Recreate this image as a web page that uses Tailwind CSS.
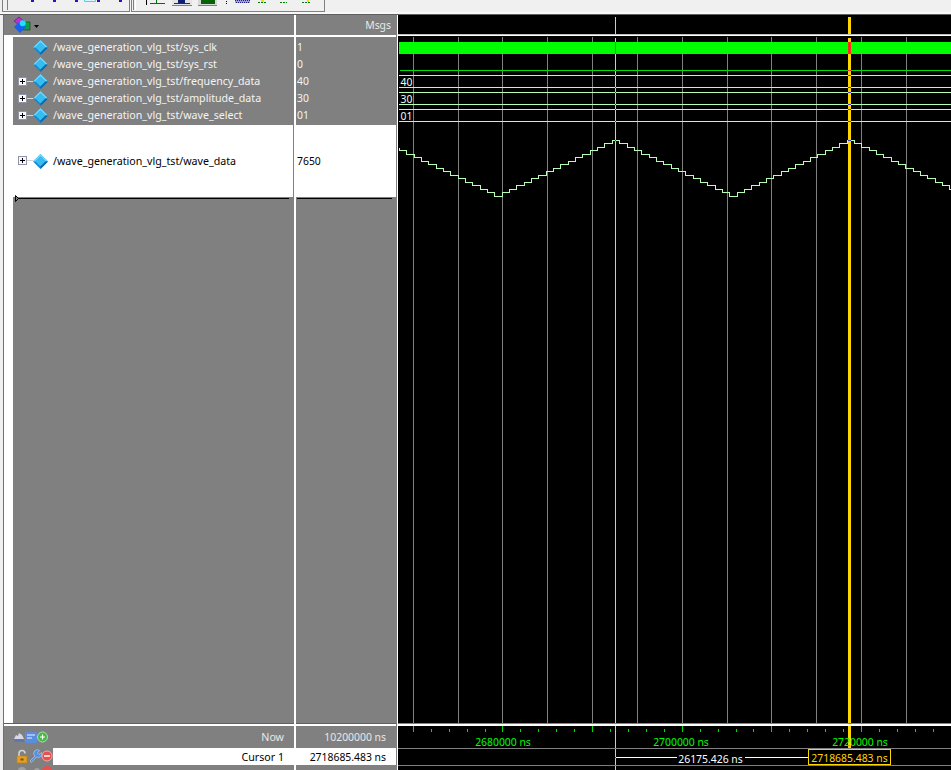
<!DOCTYPE html>
<html lang="en">
<head>
<meta charset="UTF-8">
<title>Wave</title>
<script src="https://cdn.jsdelivr.net/npm/@tailwindcss/browser@4"></script>
</head>
<body class="bg-[#f0f0f0] overflow-hidden font-['Noto_Sans',sans-serif] text-[10.65px] leading-none">

<!-- shared icons -->
<svg width="0" height="0" class="absolute">
  <defs>
    <symbol id="diamond" viewBox="0 0 15 15">
      <polygon points="7.5,0 15,7.5 7.5,15 0,7.5" fill="#1a86cc"/>
      <polygon points="7.5,0 15,7.5 12.5,7.5 7.5,2.5 2.5,7.5 0,7.5" fill="#6fd8f8"/>
      <polygon points="7.5,2.5 12.5,7.5 7.5,12.5 2.5,7.5" fill="#33bdf2"/>
      <polygon points="12.5,7.5 15,7.5 7.5,15 7.5,12.5" fill="#0a68ac"/>
    </symbol>
    <symbol id="plus" viewBox="0 0 15 10">
      <g shape-rendering="crispEdges">
        <rect x="0.5" y="0.5" width="8" height="8" fill="#f8f8fc" stroke="#9094a8"/>
        <path d="M2 4.5h5M4.5 2v5" stroke="#000"/>
        <path d="M9 4.5h6" stroke="#d4d4d4"/>
      </g>
    </symbol>
  </defs>
</svg>

<!-- toolbar strip, cut off at the top -->
<div class="flex h-[12px] gap-[1px] pl-[2px]">
  <div class="w-[128px] border-l border-r border-b border-[#808080]">
    <svg width="126" height="11" class="block">
      <path d="M4.5 0v10" stroke="#808080"/>
      <g fill="#1a1ac8">
        <rect x="28" y="0" width="3" height="2"/><rect x="50" y="0" width="3" height="2"/>
        <rect x="72" y="0" width="3" height="2"/><rect x="94" y="0" width="3" height="2"/>
        <rect x="116" y="0" width="3" height="2"/>
      </g>
      <path d="M81.5 0v1.500h11v-1.500" fill="#d8f4ff" stroke="#40d8f0"/>
    </svg>
  </div>
  <div class="w-[194px] border-l border-r border-b border-[#808080]">
    <svg width="192" height="11" class="block" shape-rendering="crispEdges">
      <path d="M1.500 0v10" stroke="#808080"/>
      <path d="M3.500 0v10" stroke="#ffffff"/>
      <path d="M14.500 0v5" stroke="#000"/>
      <path d="M18 3.500h15M24.500 0v3" stroke="#007000"/>
      <rect x="40" y="0" width="20" height="6" fill="#e4e4e4"/>
      <path d="M40 5.500h20" stroke="#808080"/>
      <path d="M42 3.500h16" stroke="#005000"/><rect x="46" y="0" width="7" height="3" fill="#102070"/>
      <rect x="66" y="0" width="19" height="6" fill="#d8d8d8"/>
      <path d="M66 5.500h19" stroke="#808080"/>
      <rect x="69" y="0" width="14" height="4" fill="#086008"/>
      <rect x="94" y="1" width="1" height="1"/><rect x="94" y="3" width="1" height="1"/>
      <rect x="103" y="0" width="15" height="3" fill="#a0a0d8"/>
      <path d="M103 0.500h15M104 2.500h14" stroke="#202080" stroke-dasharray="1 1"/>
      <path d="M126 2.500h9" stroke="#008000" stroke-dasharray="2 1"/><rect x="129" y="0" width="3" height="2" fill="#e8e020"/>
      <path d="M148 2.500h7" stroke="#008000" stroke-dasharray="2 1"/>
      <path d="M170 2.500h8" stroke="#008000" stroke-dasharray="2 1"/><rect x="175" y="0" width="2" height="2" fill="#e8e020"/>
    </svg>
  </div>
</div>
<div class="h-[3px] border-b border-[#606060] bg-[#f8f8f8]"></div>

<div class="flex h-[755px] pl-[3px]">
  <!-- signal names -->
  <div class="flex flex-col w-[291px] border-l border-[#707070] bg-white text-[#f4f4f4]">
    <div class="h-[20px] bg-[#808080] flex items-center pl-[9px] shrink-0">
      <svg width="26" height="18" viewBox="0 0 26 18">
        <polygon points="1,5 6,1 11,5 6,9" fill="#c030d0" stroke="#601070" stroke-width="0.6"/>
        <rect x="10" y="6" width="7" height="8" fill="#10a040" stroke="#084020" stroke-width="0.6"/>
        <polygon points="7,5 13,11 7,17 1,11" fill="#1860f0"/>
        <circle cx="9.700" cy="7.300" r="3" fill="#20e0f8"/>
        <polygon points="21,9 26,9 23.500,12" fill="#000"/>
      </svg>
    </div>
    <div class="h-[2px] shrink-0"></div>
    <div class="ml-[9px] bg-[#808080] pt-[2px] pb-[1px] shrink-0">
      <div class="h-[17px] flex items-center pl-[20px]"><svg width="15" height="15" class="mr-[5px]"><use href="#diamond"/></svg><span class="pb-[1px]">/wave_generation_vlg_tst/sys_clk</span></div>
      <div class="h-[17px] flex items-center pl-[20px]"><svg width="15" height="15" class="mr-[5px]"><use href="#diamond"/></svg><span class="pb-[1px]">/wave_generation_vlg_tst/sys_rst</span></div>
      <div class="h-[17px] flex items-center pl-[5px]"><svg width="15" height="10"><use href="#plus"/></svg><svg width="15" height="15" class="mr-[5px]"><use href="#diamond"/></svg><span class="pb-[1px]">/wave_generation_vlg_tst/frequency_data</span></div>
      <div class="h-[17px] flex items-center pl-[5px]"><svg width="15" height="10"><use href="#plus"/></svg><svg width="15" height="15" class="mr-[5px]"><use href="#diamond"/></svg><span class="pb-[1px]">/wave_generation_vlg_tst/amplitude_data</span></div>
      <div class="h-[17px] flex items-center pl-[5px]"><svg width="15" height="10"><use href="#plus"/></svg><svg width="15" height="15" class="mr-[5px]"><use href="#diamond"/></svg><span class="pb-[1px]">/wave_generation_vlg_tst/wave_select</span></div>
    </div>
    <div class="h-[72px] ml-[9px] flex items-center pl-[5px] text-black border-r border-[#808080] shrink-0"><svg width="15" height="10"><use href="#plus"/></svg><svg width="15" height="15" class="mr-[5px]"><use href="#diamond"/></svg><span>/wave_generation_vlg_tst/wave_data</span></div>
    <div class="relative h-[526px] ml-[9px] bg-[#808080] shrink-0">
      <div class="absolute left-[3px] top-[1px] w-[273px] h-px bg-black"></div>
      <svg width="5" height="7" class="absolute left-[2px] top-[-2px]"><path d="M0.5 0.5v6l3-3z" fill="#808080" stroke="#000"/></svg>
    </div>
    <div class="h-px bg-[#606060] shrink-0"></div>
    <div class="h-[2px] shrink-0"></div>
    <div class="bg-[#808080] flex-1 flex flex-col">
      <div class="h-[22px] flex items-center justify-between pr-[10px] text-[#e8e8e8]">
        <svg width="36" height="22" viewBox="0 0 36 22" class="ml-[9px]">
          <path d="M1 13l2-4 2 1 1-3 3 2 2 4z" fill="#d8d8e4"/><path d="M1 14.500h10" stroke="#5a74a8" stroke-width="2"/>
          <rect x="12" y="6" width="12" height="11" rx="1" fill="#5c8cdc"/><path d="M14 9h8M14 12h5" stroke="#f0f0ff"/>
          <circle cx="29.500" cy="11" r="5" fill="#48b848" stroke="#a8e4a8"/><path d="M27 11h5M29.500 8.500v5" stroke="#fff" stroke-width="1.200"/>
        </svg>
        <span>Now</span>
      </div>
      <div class="h-[17px] flex">
        <div class="w-[49px] shrink-0">
          <svg width="49" height="17" viewBox="0 0 49 17">
            <rect x="13" y="8" width="10" height="7" fill="#e0a028" stroke="#b88018" stroke-width="0.600"/>
            <rect x="16.500" y="10.500" width="3" height="2" fill="#805010"/>
            <path d="M15 8V5.500a3 3 0 0 1 6 0" fill="none" stroke="#d4d4d4" stroke-width="1.500"/>
            <path d="M26 13l5-5a3.500 3.500 0 0 1 4.500-5.500l-2 2.500 1.500 1.500 2.500-2a3.500 3.500 0 0 1-5 4.500l-5 5.500z" fill="#5890e0" stroke="#d0e0f8" stroke-width="0.500"/>
            <circle cx="43" cy="8" r="5" fill="#e85050" stroke="#f4a8a8"/><path d="M40 8h6" stroke="#fff" stroke-width="1.500"/>
          </svg>
        </div>
        <div class="flex-1 bg-white text-black flex items-center justify-end pr-[10px] pt-[1px]">Cursor 1</div>
      </div>
      <div class="flex-1">
        <svg width="49" height="5" viewBox="0 0 49 5" class="block">
          <circle cx="18" cy="6" r="4" fill="#a0a0a0"/><circle cx="33" cy="6" r="3" fill="#a0a0a0"/><circle cx="43" cy="6" r="5" fill="#e85050"/>
        </svg>
      </div>
    </div>
  </div>

  <div class="w-[2px] bg-white"></div>

  <!-- values -->
  <div class="flex flex-col w-[100px] bg-white text-[#f4f4f4] text-[10.4px]">
    <div class="h-[20px] bg-[#808080] flex items-center justify-end pr-[5px] text-[#e8e8e8] shrink-0">Msgs</div>
    <div class="h-[2px] shrink-0"></div>
    <div class="bg-[#808080] pt-[2px] pb-[1px] pl-[1px] shrink-0">
      <div class="h-[17px] flex items-center pb-[1px]">1</div>
      <div class="h-[17px] flex items-center pb-[1px]">0</div>
      <div class="h-[17px] flex items-center pb-[1px]">40</div>
      <div class="h-[17px] flex items-center pb-[1px]">30</div>
      <div class="h-[17px] flex items-center pb-[1px]">01</div>
    </div>
    <div class="h-[72px] flex items-center pl-[1px] text-black shrink-0">7650</div>
    <div class="relative h-[526px] bg-[#808080] shrink-0">
      <div class="absolute left-[1px] top-[1px] w-[95px] h-px bg-black"></div>
    </div>
    <div class="h-px bg-[#606060] shrink-0"></div>
    <div class="h-[2px] shrink-0"></div>
    <div class="bg-[#808080] flex-1 flex flex-col">
      <div class="h-[22px] flex items-center justify-end pr-[10px] text-[#e8e8e8]">10200000 ns</div>
      <div class="h-[17px] flex items-center justify-end pr-[10px] pt-[1px] bg-white text-black">2718685.483 ns</div>
    </div>
  </div>

  <div class="w-[2px] bg-white border-l border-[#808080]"></div>

  <!-- waveforms, drawn in page coordinates -->
  <svg id="wave" class="block bg-black" width="553" height="755" viewBox="398 15 553 755" shape-rendering="crispEdges" font-family="'Noto Sans',sans-serif" font-size="10.4">
    <rect x="398" y="34" width="553" height="1" fill="#c0c0c0"/>
    <rect x="398" y="35" width="553" height="1" fill="#ffffff"/>
    <g id="grid" fill="#808080"></g>
    <rect x="399" y="42" width="552" height="12" fill="#00ff00"/>
    <rect x="400" y="70" width="551" height="1" fill="#00e000"/>
    <g fill="#b4ffb4">
      <rect x="399" y="75" width="552" height="1"/><rect x="399" y="87" width="552" height="1"/>
      <rect x="399" y="92" width="552" height="1"/><rect x="399" y="104" width="552" height="1"/>
      <rect x="399" y="109" width="552" height="1"/><rect x="399" y="121" width="552" height="1"/>
    </g>
    <path id="data" fill="none" stroke="#b4ffb4"/>

    <!-- cursors -->
    <rect x="615" y="17" width="1" height="17" fill="#ffd700"/>
    <rect x="615" y="38" width="1" height="732" fill="#ffd700"/>
    <rect x="848" y="17" width="3" height="17" fill="#ffd700"/>
    <rect x="848" y="38" width="3" height="710" fill="#ffd700"/>
    <g fill="#ff2a1a">
      <rect x="615" y="42" width="1" height="12"/><rect x="848" y="42" width="3" height="12"/>
      <rect x="615" y="70" width="1" height="1"/><rect x="848" y="70" width="3" height="1"/>
    </g>
    <g id="cross" fill="#3a3ac8"></g>

    <g fill="#ecfff4">
      <text x="400.500" y="86">40</text>
      <text x="400.500" y="103">30</text>
      <text x="400.500" y="120">01</text>
    </g>

    <!-- ruler -->
    <rect x="398" y="723" width="553" height="1" fill="#808080"/>
    <rect x="398" y="724" width="553" height="2" fill="#ffffff"/>
    <g id="ticks" fill="#00e000"></g>
    <g fill="#00ff00" text-anchor="middle">
      <text x="503" y="746">2680000 ns</text>
      <text x="681" y="746">2700000 ns</text>
      <text x="860" y="746">2720000 ns</text>
    </g>

    <!-- cursor readouts -->
    <rect x="398" y="748" width="553" height="1" fill="#808080"/>
    <rect x="398" y="765" width="553" height="1" fill="#808080"/>
    <rect x="615" y="757" width="62" height="1" fill="#ffffff"/>
    <rect x="745" y="757" width="63" height="1" fill="#ffffff"/>
    <rect x="615" y="757" width="1" height="1" fill="#3a3ac8"/>
    <text x="710.500" y="763" fill="#ffffff" text-anchor="middle">26175.426 ns</text>
    <rect x="808.500" y="749.500" width="82" height="15" fill="#000" stroke="#ffd700"/>
    <text x="849.500" y="762" fill="#ffd700" text-anchor="middle">2718685.483 ns</text>
  </svg>
</div>

<script>
  const ns = "http://www.w3.org/2000/svg";
  function put(parent, x, y, w, h) {
    const r = document.createElementNS(ns, "rect");
    r.setAttribute("x", x); r.setAttribute("y", y);
    r.setAttribute("width", w); r.setAttribute("height", h);
    document.getElementById(parent).appendChild(r);
  }

  // grid lines every 44.85px
  for (let i = 0; i < 13; i++) {
    put("grid", Math.floor(413.3 + i * 44.83), 37, 1, 686);
  }

  // ruler ticks
  for (let i = 0; i < 31; i++) {
    const x = Math.floor(413.3 + i * 17.93);
    if (i % 5 === 0) put("ticks", x, 726, 1, 6);
    else put("ticks", x, 729, 1, 3);
  }

  // triangle wave as a staircase, 32 steps per period
  function level(k) {
    const d = (((k - 29) % 32) + 32) % 32;
    const idx = d <= 16 ? d : 32 - d;
    return 140 + Math.floor(idx / 2) * 7 + (idx % 2) * 3 + 0.5;
  }
  let d = "M399.5 147.5V" + level(0);
  for (let k = 0; k < 76; k++) {
    const x = Math.round(406.3 + k * 7.34) + 0.5;
    d += "H" + x + "V" + level(k + 1);
  }
  document.getElementById("data").setAttribute("d", d);

  // cursor crossings on the bus lines
  [75, 87, 92, 104, 109, 121].forEach(function (y) {
    put("cross", 615, y, 1, 1);
    put("cross", 848, y, 3, 1);
  });
  put("cross", 615, 140, 1, 1);
  put("cross", 848, 140, 3, 1);
</script>
</body>
</html>
